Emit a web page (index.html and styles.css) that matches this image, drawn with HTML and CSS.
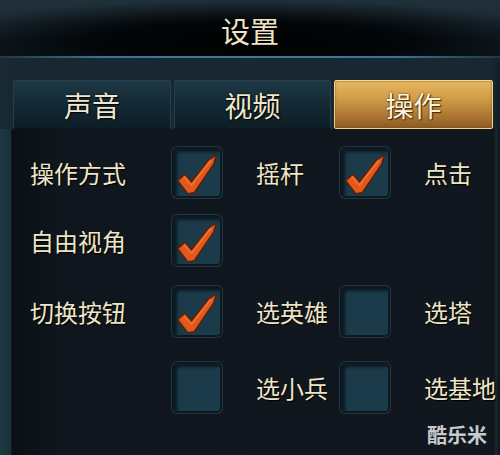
FILE: index.html
```html
<!DOCTYPE html>
<html lang="zh-CN">
<head>
<meta charset="utf-8">
<title>设置</title>
<link rel="stylesheet" href="styles.css">
</head>
<body>
<div class="screen">
  <header class="header">
    <h1 class="title">设置</h1>
  </header>
  <div class="main">
    <nav class="tabs">
      <div class="tab">声音</div>
      <div class="tab">视频</div>
      <div class="tab active">操作</div>
    </nav>
    <div class="options">
      <div class="label">操作方式</div>
      <div class="box checked"><svg viewBox="0 0 50 50"><path class="ck" d="M4 34 L12 27 L19 35 L37 12 L46 6 L43 16 L22 47 L15 48 Z"/><path class="hl" d="M11 30 L19 39 L40 12"/></svg></div>
      <div class="label l2">摇杆</div>
      <div class="box checked"><svg viewBox="0 0 50 50"><path class="ck" d="M4 34 L12 27 L19 35 L37 12 L46 6 L43 16 L22 47 L15 48 Z"/><path class="hl" d="M11 30 L19 39 L40 12"/></svg></div>
      <div class="label l3">点击</div>

      <div class="label">自由视角</div>
      <div class="box checked"><svg viewBox="0 0 50 50"><path class="ck" d="M4 34 L12 27 L19 35 L37 12 L46 6 L43 16 L22 47 L15 48 Z"/><path class="hl" d="M11 30 L19 39 L40 12"/></svg></div>
      <div class="empty"></div>
      <div class="empty"></div>
      <div class="empty"></div>

      <div class="label">切换按钮</div>
      <div class="box checked"><svg viewBox="0 0 50 50"><path class="ck" d="M4 34 L12 27 L19 35 L37 12 L46 6 L43 16 L22 47 L15 48 Z"/><path class="hl" d="M11 30 L19 39 L40 12"/></svg></div>
      <div class="label l2">选英雄</div>
      <div class="box"></div>
      <div class="label l3">选塔</div>

      <div class="empty"></div>
      <div class="box"></div>
      <div class="label l2">选小兵</div>
      <div class="box"></div>
      <div class="label l3">选基地</div>
    </div>
  </div>
  <div class="watermark">酷乐米</div>
</div>
</body>
</html>
```

FILE: styles.css
```css
* { box-sizing: border-box; }
html, body { margin: 0; padding: 0; }
body {
  width: 500px;
  height: 455px;
  overflow: hidden;
  background: #10171d;
  font-family: "Noto Sans CJK SC", "Noto Sans", sans-serif;
  color: #efe5c6;
}
.screen {
  position: relative;
  width: 500px;
  height: 455px;
  display: flex;
  flex-direction: column;
}
.header {
  height: 58px;
  flex: none;
  display: flex;
  align-items: center;
  justify-content: center;
  background:
    radial-gradient(ellipse 66% 75% at 50% 75%, #000 0%, #03070a 50%, rgba(3,7,10,0) 100%),
    linear-gradient(#20303a, #1a2831 55%, #0f1a20);
  border-bottom: 2px solid transparent;
  border-image: linear-gradient(90deg, rgba(40,80,100,0.2), #3a7391 20%, #3f7b98 50%, #3a7391 80%, rgba(40,80,100,0.2)) 1;
}
.title {
  margin: 4px 0 0 0;
  font-size: 29px;
  font-weight: 400;
  color: #eee3c4;
  text-shadow: 1px 1px 1px #000;
}
.main {
  flex: 1;
  background:
    linear-gradient(90deg, #1d3a42 0, #183038 11px, #070c10 12px, #0a1015 13px, #0f161d 60px, #10171e 480px, #0f161c 494px, #1a2a31 496px, #0f161c 499px);
  display: flex;
  flex-direction: column;
}
.tabs {
  padding: 22px 6px 0 13px;
  display: grid;
  grid-template-columns: 158px 157px 159px;
  column-gap: 3px;
  background: linear-gradient(90deg, #1a2c33 0, #182731 13px, #182731 490px, #142028 500px);
}
.tab {
  height: 49px;
  display: flex;
  align-items: center;
  justify-content: center;
  font-size: 28px;
  color: #f0e8ce;
  text-shadow: 1px 1px 1px #000, 0 0 2px #000;
  background: linear-gradient(#1e3845, #142a35 50%, #0e1d26);
  border: 1px solid #243f4c;
  border-bottom-color: #0a141a;
  border-radius: 2px;
}
.tab.active {
  background: linear-gradient(#e6b860, #cf9a45 40%, #a67030 80%, #8a5a22);
  border: 1px solid #f3d58c;
  box-shadow: inset 0 0 2px #7a4a14;
  color: #fbf3dc;
  text-shadow: 1px 1px 1px #4a2a08, 0 0 2px #3a2006;
}
.options {
  display: grid;
  grid-template-columns: 142px 50px 118px 50px 1fr;
  grid-template-rows: 68px 71px 76px 51px;
  align-items: start;
  padding: 18px 0 0 30px;
}
.label {
  font-size: 24px;
  line-height: 51px;
  height: 51px;
  color: #efe5c6;
  text-shadow: 1px 1px 1px #000;
  white-space: nowrap;
}
.l2, .l3 { padding-left: 34px; }
.box {
  width: 50px;
  height: 51px;
  border-radius: 5px;
  background: #1b3a4a;
  border: 2px solid #0d1820;
  box-shadow: inset 3px 3px 3px rgba(0,0,0,0.55), 0 0 0 1px #22343e;
  position: relative;
}
.box svg {
  position: absolute;
  left: 0;
  top: 0;
  width: 46px;
  height: 47px;
  overflow: visible;
}
.ck {
  fill: #e3581c;
  stroke: #5a1f08;
  stroke-width: 1.5;
  stroke-linejoin: round;
}
.hl {
  fill: none;
  stroke: #f58a50;
  stroke-width: 1.5;
  stroke-linecap: round;
  stroke-linejoin: round;
  opacity: 0.6;
}
.watermark {
  position: absolute;
  left: 427px;
  top: 420px;
  font-size: 20px;
  font-weight: 700;
  color: #c6cacd;
}
```
